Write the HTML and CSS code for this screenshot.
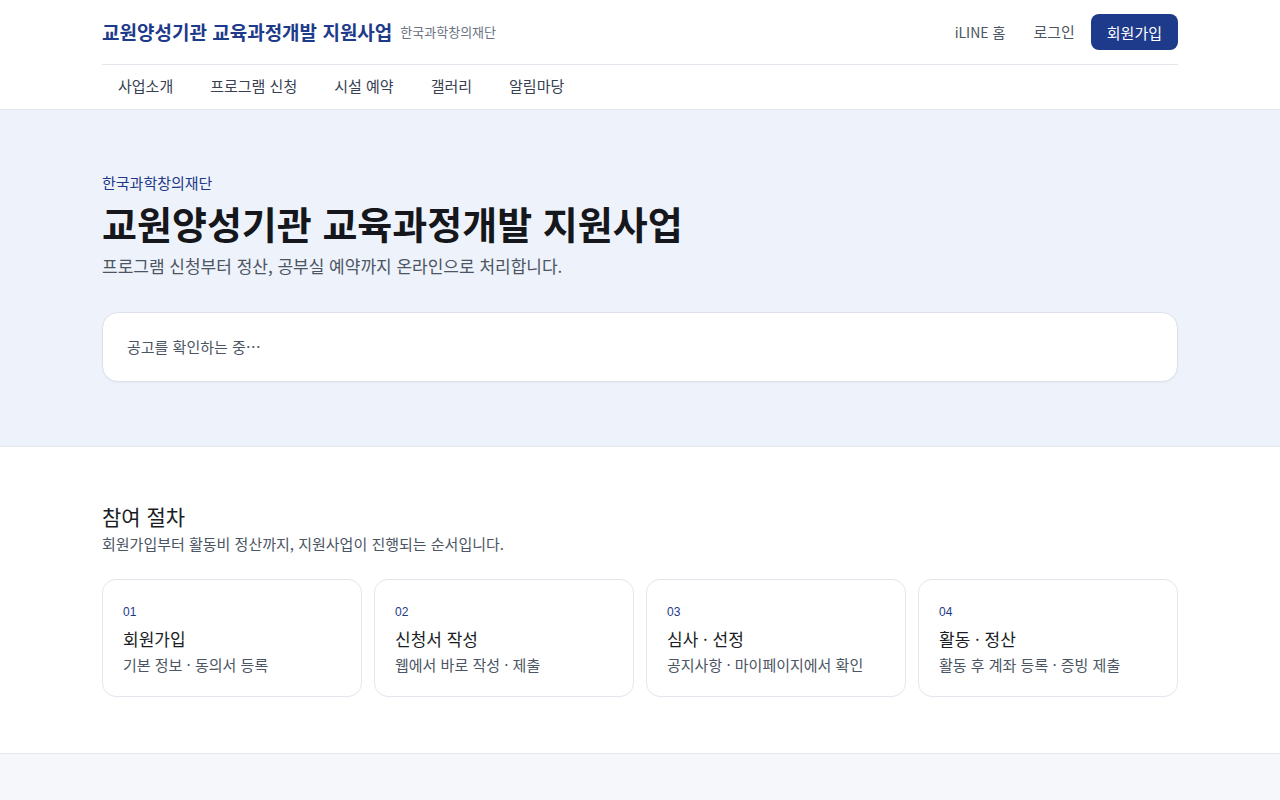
FILE: index.html
```html
<!DOCTYPE html>
<html lang="ko">
  <head>
    <meta charset="UTF-8" />
    <meta name="viewport" content="width=device-width, initial-scale=1.0" />
    <title>교원양성기관 교육과정개발 지원사업</title>
    <link rel="stylesheet" href="styles.css">
  </head>
  <body>
    <header class="site-header">
      <div class="container">
        <div class="header-top">
          <div class="brand">
            <a href="#" class="brand-title">교원양성기관 교육과정개발 지원사업</a>
            <span class="brand-sub">한국과학창의재단</span>
          </div>
          <div class="header-actions">
            <a href="#" class="action-link">iLINE 홈</a>
            <a href="#" class="action-link">로그인</a>
            <a href="#" class="join-btn">회원가입</a>
          </div>
        </div>
        <nav class="main-nav">
          <a href="#">사업소개</a>
          <a href="#">프로그램 신청</a>
          <a href="#">시설 예약</a>
          <a href="#">갤러리</a>
          <a href="#">알림마당</a>
        </nav>
      </div>
    </header>

    <section class="hero">
      <div class="container">
        <p class="eyebrow">한국과학창의재단</p>
        <h1>교원양성기관 교육과정개발 지원사업</h1>
        <p class="lead">프로그램 신청부터 정산, 공부실 예약까지 온라인으로 처리합니다.</p>
        <div class="notice-card">공고를 확인하는 중…</div>
      </div>
    </section>

    <section class="steps">
      <div class="container">
        <h2>참여 절차</h2>
        <p class="section-desc">회원가입부터 활동비 정산까지, 지원사업이 진행되는 순서입니다.</p>
        <div class="step-grid">
          <div class="step-card">
            <span class="step-num">01</span>
            <h3>회원가입</h3>
            <p>기본 정보 · 동의서 등록</p>
          </div>
          <div class="step-card">
            <span class="step-num">02</span>
            <h3>신청서 작성</h3>
            <p>웹에서 바로 작성 · 제출</p>
          </div>
          <div class="step-card">
            <span class="step-num">03</span>
            <h3>심사 · 선정</h3>
            <p>공지사항 · 마이페이지에서 확인</p>
          </div>
          <div class="step-card">
            <span class="step-num">04</span>
            <h3>활동 · 정산</h3>
            <p>활동 후 계좌 등록 · 증빙 제출</p>
          </div>
        </div>
      </div>
    </section>

    <footer class="site-footer"></footer>
  </body>
</html>
```

FILE: styles.css
```css
body {
  font-family: "Noto Sans CJK KR", "Liberation Sans", sans-serif;
  margin: 0;
  color: #1a1d24;
  background-color: #f6f7fb;
}

a {
  text-decoration: none;
  color: inherit;
}

.container {
  width: 1076px;
  margin: 0 auto;
}

.site-header {
  background-color: #fff;
  border-bottom: 1px solid #e3e6ec;
}

.header-top {
  height: 64px;
  display: flex;
  align-items: center;
  justify-content: space-between;
  border-bottom: 1px solid #e3e6ec;
}

.brand {
  display: flex;
  align-items: center;
  gap: 8px;
}

.brand-title {
  font-size: 19px;
  font-weight: 700;
  color: #1e3a8a;
  line-height: 26px;
}

.brand-sub {
  font-size: 13px;
  color: #6b7280;
  line-height: 18px;
}

.header-actions {
  display: flex;
  align-items: center;
}

.action-link {
  font-size: 15px;
  color: #4b5563;
  padding: 6px 14px;
  line-height: 20px;
}

.action-link:first-child {
  font-size: 14px;
}

.join-btn {
  margin-left: 2px;
  background-color: #1e3a8a;
  color: #fff;
  font-size: 15px;
  height: 36px;
  padding: 0 16px;
  display: flex;
  align-items: center;
  border-radius: 8px;
}

.main-nav {
  height: 44px;
  display: flex;
  align-items: center;
  gap: 5px;
}

.main-nav a {
  font-size: 15px;
  color: #374151;
  padding: 0 16px;
  line-height: 20px;
  margin-top: -2px;
}

.hero {
  background-color: #eef2fa;
  padding: 62px 0 64px;
  border-bottom: 1px solid #e3e6ec;
}

.eyebrow {
  margin: 0 0 4px;
  font-size: 15px;
  line-height: 22px;
  color: #1e3a8a;
}

.hero h1 {
  margin: 0;
  font-size: 38px;
  font-weight: 700;
  line-height: 50px;
  color: #15171c;
}

.lead {
  margin: 5px 0 33px;
  font-size: 17px;
  line-height: 26px;
  color: #4b5563;
}

.notice-card {
  background-color: #fff;
  border: 1px solid #dde2ea;
  border-radius: 16px;
  padding: 24px 24px;
  font-size: 15px;
  color: #4b5563;
  line-height: 20px;
  box-shadow: 0 1px 2px rgba(0, 0, 0, 0.04);
}

.steps {
  background-color: #fff;
  padding: 54px 0 56px;
  border-bottom: 1px solid #e3e6ec;
}

.steps h2 {
  margin: 0;
  font-size: 21px;
  font-weight: 400;
  line-height: 30px;
}

.section-desc {
  margin: 2px 0 24px;
  font-size: 15px;
  line-height: 22px;
  color: #4b5563;
}

.step-grid {
  display: grid;
  grid-template-columns: repeat(4, 1fr);
  gap: 12px;
}

.step-card {
  border: 1px solid #e3e6ec;
  border-radius: 14px;
  padding: 24px 20px 20px;
  height: 118px;
  box-sizing: border-box;
}

.step-num {
  display: block;
  font-family: "Liberation Sans", sans-serif;
  font-size: 12px;
  color: #1e3a8a;
  line-height: 16px;
}

.step-card h3 {
  margin: 8px 0 5px;
  font-size: 17px;
  font-weight: 400;
  line-height: 22px;
}

.step-card p {
  margin: 0;
  font-size: 15px;
  color: #4b5563;
  line-height: 20px;
}

.site-footer {
  height: 46px;
  background-color: #f6f7fb;
}
```
